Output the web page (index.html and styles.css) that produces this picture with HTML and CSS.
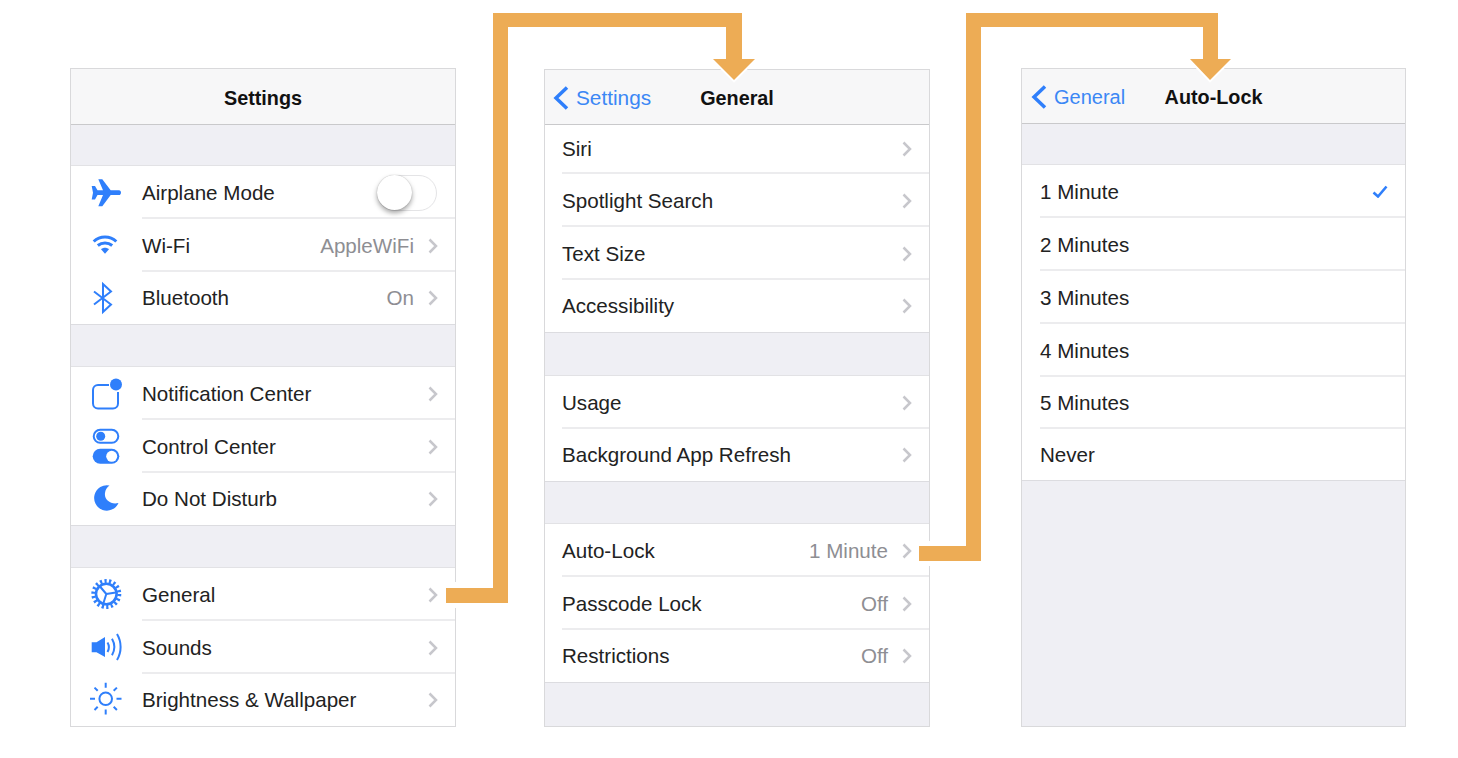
FILE: index.html
```html
<!DOCTYPE html>
<html lang="en">
<head>
  <meta charset="UTF-8" />
  <title>Settings navigation</title>
  <link rel="stylesheet" href="styles.css">
</head>
<body>
  <div class="flow">

    <div class="panel panel-main">
      <div class="nav"><span class="nav-title">Settings</span></div>
      <div class="gap first"></div>
      <div class="row">
        <svg class="icon" viewBox="0 0 30 30"><path d="M.7 8H4l2.5 4.3H12L7.3 1.3h4l8.4 11H28c1.3 0 2 1.2 2 2.35S29.3 17 28 17h-8.3l-8.4 11.3h-4L12 17H6.5L4 21.5H.7L2 14.65z"/></svg>
        <span class="label">Airplane Mode</span>
        <span class="switch"><span class="knob"></span></span>
      </div>
      <div class="row">
        <svg class="icon" viewBox="0 0 30 30"><path class="thick" d="M2.7 10.5C9 4.5 19 4.5 25.3 10.5"/><path class="thick" d="M6.8 14.5C11 11 17 11 21.2 14.5"/><path d="M10 18.3c2.3-2 5.7-2 8 0l-4 4.5z"/></svg>
        <span class="label">Wi-Fi</span>
        <span class="value">AppleWiFi</span>
        <svg class="chev" viewBox="0 0 10 16"><path d="M1.5 1.5 8 8l-6.5 6.5"/></svg>
      </div>
      <div class="row last">
        <svg class="icon" viewBox="0 0 30 30"><path class="line" d="M3 8.5 20 21.5 12 29V1L20 8.5 3 21.5"/></svg>
        <span class="label">Bluetooth</span>
        <span class="value">On</span>
        <svg class="chev" viewBox="0 0 10 16"><path d="M1.5 1.5 8 8l-6.5 6.5"/></svg>
      </div>
      <div class="gap"></div>
      <div class="row">
        <svg class="icon" viewBox="0 0 30 30"><path class="line" d="M18 6H7a5 5 0 0 0-5 5v13.5a5 5 0 0 0 5 5h15a5 5 0 0 0 5-5V13"/><circle cx="25" cy="5.5" r="6"/></svg>
        <span class="label">Notification Center</span>
        <svg class="chev" viewBox="0 0 10 16"><path d="M1.5 1.5 8 8l-6.5 6.5"/></svg>
      </div>
      <div class="row">
        <svg class="icon" viewBox="0 0 30 30"><rect class="line" x="2.7" y="-2.2" width="24.6" height="13" rx="6.5"/><circle cx="9.7" cy="4.3" r="4.5"/><rect x="1.7" y="16.8" width="26.6" height="15" rx="7.5"/><circle class="hole" cx="20.7" cy="24.3" r="5.5"/></svg>
        <span class="label">Control Center</span>
        <svg class="chev" viewBox="0 0 10 16"><path d="M1.5 1.5 8 8l-6.5 6.5"/></svg>
      </div>
      <div class="row last">
        <svg class="icon" viewBox="0 0 30 30"><path d="M18.5 1.5A12.7 12.7 0 1 0 27.5 19C20 21 13 16 14 9c.3-3 2-6 4.5-7.5z"/></svg>
        <span class="label">Do Not Disturb</span>
        <svg class="chev" viewBox="0 0 10 16"><path d="M1.5 1.5 8 8l-6.5 6.5"/></svg>
      </div>
      <div class="gap"></div>
      <div class="row">
        <svg class="icon" viewBox="0 0 30 30"><circle class="gear" cx="15.3" cy="14" r="13"/><circle class="ring" cx="15.3" cy="14" r="10.3"/><path class="line" d="M15.3 14 9 6.5M15.3 14l9.5-1.5M15.3 14l-3 9.5"/></svg>
        <span class="label">General</span>
        <svg class="chev" viewBox="0 0 10 16"><path d="M1.5 1.5 8 8l-6.5 6.5"/></svg>
      </div>
      <div class="row">
        <svg class="icon" viewBox="0 0 30 30"><path d="M.7 9.2h4.8L14 4v20l-8.5-4.8H.7z"/><path class="line" d="M16.5 9.5c1.8 3 1.8 6.5 0 9.5M21 5.8c3 5.2 3 11.2 0 16.4M26 1c4.8 8 4.8 18 0 26"/></svg>
        <span class="label">Sounds</span>
        <svg class="chev" viewBox="0 0 10 16"><path d="M1.5 1.5 8 8l-6.5 6.5"/></svg>
      </div>
      <div class="row last">
        <svg class="icon" viewBox="0 0 30 30"><circle class="line" cx="14.7" cy="13.8" r="6.3"/><path class="line" d="M14.7-2.2v5M14.7 24.5v5M-1 13.8h5M25.5 13.8h5M3.5 2.6l3.2 3.2M22.7 21.8l3.2 3.2M3.5 25l3.2-3.2M22.7 5.8l3.2-3.2"/></svg>
        <span class="label">Brightness &amp; Wallpaper</span>
        <svg class="chev" viewBox="0 0 10 16"><path d="M1.5 1.5 8 8l-6.5 6.5"/></svg>
      </div>
    </div>

    <div class="panel panel-general">
      <div class="nav">
        <span class="back">
          <svg class="back-icon" viewBox="0 0 16 24"><path d="M14 1.5 3 12l11 10.5"/></svg>
          Settings
        </span>
        <span class="nav-title">General</span>
      </div>
      <div class="row short"><span class="text">Siri</span><svg class="chev" viewBox="0 0 10 16"><path d="M1.5 1.5 8 8l-6.5 6.5"/></svg></div>
      <div class="row"><span class="text">Spotlight Search</span><svg class="chev" viewBox="0 0 10 16"><path d="M1.5 1.5 8 8l-6.5 6.5"/></svg></div>
      <div class="row"><span class="text">Text Size</span><svg class="chev" viewBox="0 0 10 16"><path d="M1.5 1.5 8 8l-6.5 6.5"/></svg></div>
      <div class="row last"><span class="text">Accessibility</span><svg class="chev" viewBox="0 0 10 16"><path d="M1.5 1.5 8 8l-6.5 6.5"/></svg></div>
      <div class="gap wide"></div>
      <div class="row"><span class="text">Usage</span><svg class="chev" viewBox="0 0 10 16"><path d="M1.5 1.5 8 8l-6.5 6.5"/></svg></div>
      <div class="row last"><span class="text">Background App Refresh</span><svg class="chev" viewBox="0 0 10 16"><path d="M1.5 1.5 8 8l-6.5 6.5"/></svg></div>
      <div class="gap"></div>
      <div class="row"><span class="text">Auto-Lock</span><span class="value">1 Minute</span><svg class="chev" viewBox="0 0 10 16"><path d="M1.5 1.5 8 8l-6.5 6.5"/></svg></div>
      <div class="row"><span class="text">Passcode Lock</span><span class="value">Off</span><svg class="chev" viewBox="0 0 10 16"><path d="M1.5 1.5 8 8l-6.5 6.5"/></svg></div>
      <div class="row last"><span class="text">Restrictions</span><span class="value">Off</span><svg class="chev" viewBox="0 0 10 16"><path d="M1.5 1.5 8 8l-6.5 6.5"/></svg></div>
    </div>

    <div class="panel panel-lock">
      <div class="nav">
        <span class="back">
          <svg class="back-icon" viewBox="0 0 16 24"><path d="M14 1.5 3 12l11 10.5"/></svg>
          General
        </span>
        <span class="nav-title">Auto-Lock</span>
      </div>
      <div class="gap first"></div>
      <div class="row"><span class="text">1 Minute</span><svg class="check" viewBox="0 0 16 13"><path d="M1.5 7.5 6 11.5 14.5 1.5"/></svg></div>
      <div class="row"><span class="text">2 Minutes</span></div>
      <div class="row"><span class="text">3 Minutes</span></div>
      <div class="row"><span class="text">4 Minutes</span></div>
      <div class="row tight"><span class="text">5 Minutes</span></div>
      <div class="row tight last"><span class="text">Never</span></div>
    </div>

    <!-- connectors sit over the panels -->
    <svg class="arrows" viewBox="0 0 1458 758">
      <rect class="cut" x="452" y="582" width="8" height="26"/>
      <rect class="cut" x="926" y="541" width="8" height="25"/>
      <path class="halo" d="M446 588h47V13h249v46h13l-21 21-21-21h13V27H508v576h-62z"/>
      <path class="arrow" d="M446 588h47V13h249v46h13l-21 21-21-21h13V27H508v576h-62z"/>
      <path class="halo" d="M919 546h47V13h252v46h13l-21 21-20-21h13V27H981v534h-62z"/>
      <path class="arrow" d="M919 546h47V13h252v46h13l-21 21-20-21h13V27H981v534h-62z"/>
    </svg>
  </div>
</body>
</html>
```

FILE: styles.css
```css
html, body {
  margin: 0;
  padding: 0;
  background: #fff;
  overflow: hidden;
}
body {
  font-family: "Liberation Sans", Arial, sans-serif;
  color: #222;
}
.flow {
  position: relative;
  display: flex;
  align-items: flex-start;
  height: 758px;
  padding: 68px 0 0 70px;
  box-sizing: border-box;
}
.panel {
  width: 386px;
  height: 659px;
  box-sizing: border-box;
  background: #efeff4;
  border: 1px solid #d9d9db;
  overflow: hidden;
  display: flex;
  flex-direction: column;
}
.panel-general {
  margin-left: 88px;
  margin-top: 1px;
  height: 658px;
}
.panel-lock {
  margin-left: 91px;
  width: 385px;
}
.nav {
  position: relative;
  height: 55px;
  flex-shrink: 0;
  padding-top: 3px;
  background: #f7f7f8;
  border-bottom: 1px solid #c9c9cb;
  display: flex;
  align-items: center;
  justify-content: center;
  box-sizing: border-box;
}
.panel-main .nav {
  height: 56px;
  padding-top: 4px;
}
.nav-title {
  font-size: 19.8px;
  font-weight: bold;
  color: #111;
}
.back {
  position: absolute;
  left: 8px;
  top: 2px;
  bottom: 0;
  display: flex;
  align-items: center;
  gap: 7px;
  font-size: 20.8px;
  color: #3b87f5;
}
.panel-lock .back {
  left: 9px;
  font-size: 20px;
}
.back-icon {
  width: 16px;
  height: 24px;
  fill: none;
  stroke: #2f7ffb;
  stroke-width: 3.5;
}
.gap {
  height: 42px;
  flex-shrink: 0;
  box-sizing: border-box;
  border-bottom: 1px solid #e2e2e5;
}
.gap.first {
  height: 41px;
}
.gap.wide {
  height: 43px;
}
.row {
  height: 53px;
  flex-shrink: 0;
  box-sizing: border-box;
  background: #fff;
  display: flex;
  align-items: center;
  padding-right: 17px;
  font-size: 20.6px;
  position: relative;
}
.row::after {
  content: "";
  position: absolute;
  left: 71px;
  right: 0;
  bottom: 0;
  height: 2px;
  background: #ececee;
}
.panel-general .row::after {
  left: 17px;
}
.panel-lock .row::after {
  left: 18px;
}
.row.last {
  border-bottom: 1px solid #dcdce0;
}
.row.last::after {
  display: none;
}
.row.short {
  height: 49px;
  padding-bottom: 2px;
}
.row.tight {
  height: 52px;
}
.icon {
  width: 30px;
  height: 30px;
  margin: 0 21px 0 20px;
  flex-shrink: 0;
  fill: #2f7ffb;
  overflow: visible;
}
.icon .line, .icon .thick, .icon .ring {
  fill: none;
  stroke: #2f7ffb;
  stroke-width: 2;
}
.icon .thick {
  stroke-width: 3;
}
.icon .ring {
  stroke-width: 2.6;
}
.icon .gear {
  fill: none;
  stroke: #2f7ffb;
  stroke-width: 4;
  stroke-dasharray: 2.2 2.34;
}
.icon .hole {
  fill: #fff;
}
.label {
  flex: 1;
}
.text {
  flex: 1;
  margin-left: 17px;
}
.panel-lock .text {
  margin-left: 18px;
}
.value {
  color: #8e8e93;
  margin-right: 14px;
}
.chev {
  width: 10px;
  height: 16px;
  flex-shrink: 0;
  fill: none;
  stroke: #c7c7cc;
  stroke-width: 2.5;
}
.check {
  width: 16px;
  height: 13px;
  fill: none;
  stroke: #2f7ffb;
  stroke-width: 2.6;
}
.switch {
  position: relative;
  width: 60px;
  height: 36px;
  border: 1px solid #e4e4e6;
  border-radius: 18px;
  box-sizing: border-box;
  margin-right: 1px;
}
.knob {
  position: absolute;
  left: -1px;
  top: -1px;
  width: 35px;
  height: 35px;
  border-radius: 50%;
  background: #fff;
  box-shadow: 0 3px 5px rgba(0, 0, 0, 0.35), 0 0 1px rgba(0, 0, 0, 0.3);
}
.arrows {
  position: absolute;
  left: 0;
  top: 0;
  width: 1458px;
  height: 758px;
  pointer-events: none;
}
.arrows .arrow {
  fill: #edac55;
}
.arrows .halo {
  fill: none;
  stroke: #fff;
  stroke-width: 4;
}
.arrows .cut {
  fill: #fff;
}
```
